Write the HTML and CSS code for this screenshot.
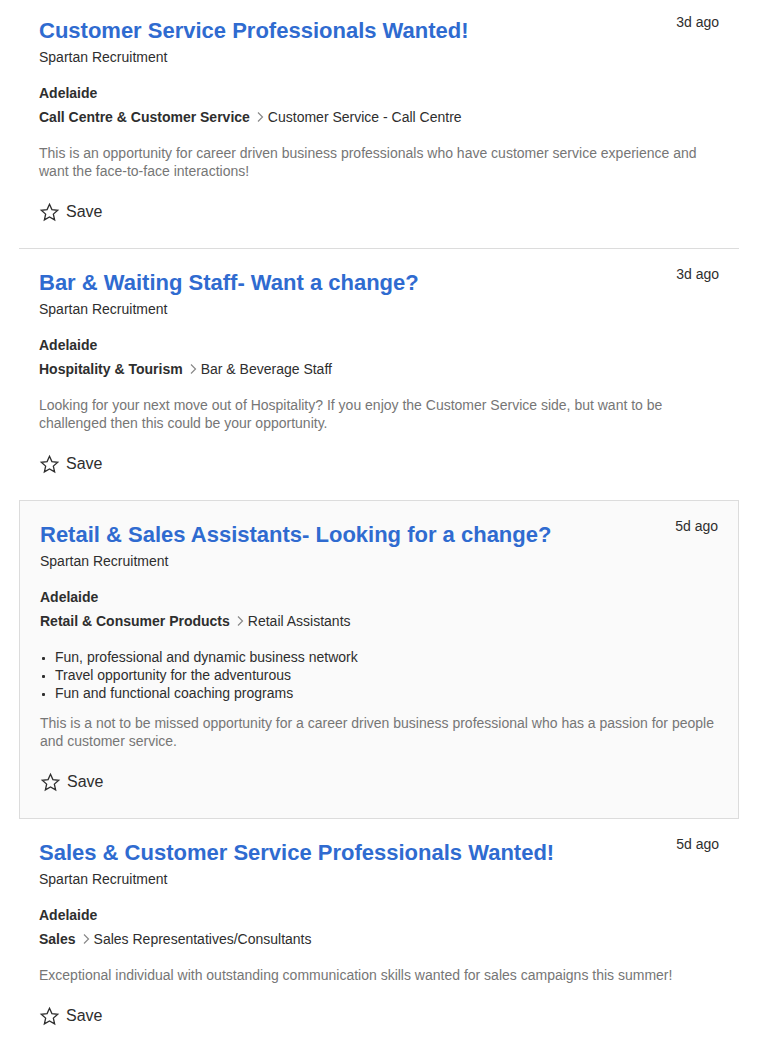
FILE: index.html
```html
<!DOCTYPE html>
<html lang="en">
<head>
<meta charset="utf-8">
<title>Jobs</title>
<link rel="stylesheet" href="styles.css">
</head>
<body>
<div class="list">
  <article class="card">
    <div class="date">3d ago</div>
    <h2 class="title">Customer Service Professionals Wanted!</h2>
    <div class="company">Spartan Recruitment</div>
    <div class="location">Adelaide</div>
    <div class="category"><b>Call Centre &amp; Customer Service</b><svg class="chev" viewBox="0 0 8 12" width="8" height="12"><path d="M2 1.5 L6.5 6 L2 10.5" fill="none" stroke="#888" stroke-width="1.2"/></svg><span>Customer Service - Call Centre</span></div>
    <p class="desc">This is an opportunity for career driven business professionals who have customer service experience and want the face-to-face interactions!</p>
    <div class="save"><svg class="star" viewBox="0 0 24 24" width="21" height="21"><path d="M12 2.6 L14.75 8.7 L21.4 9.4 L16.4 13.85 L17.85 20.4 L12 17.05 L6.15 20.4 L7.6 13.85 L2.6 9.4 L9.25 8.7 Z" fill="none" stroke="#2e2e2e" stroke-width="1.5" stroke-linejoin="miter"/></svg><span>Save</span></div>
  </article>
  <article class="card no-line">
    <div class="date">3d ago</div>
    <h2 class="title">Bar &amp; Waiting Staff- Want a change?</h2>
    <div class="company">Spartan Recruitment</div>
    <div class="location">Adelaide</div>
    <div class="category"><b>Hospitality &amp; Tourism</b><svg class="chev" viewBox="0 0 8 12" width="8" height="12"><path d="M2 1.5 L6.5 6 L2 10.5" fill="none" stroke="#888" stroke-width="1.2"/></svg><span>Bar &amp; Beverage Staff</span></div>
    <p class="desc">Looking for your next move out of Hospitality? If you enjoy the Customer Service side, but want to be challenged then this could be your opportunity.</p>
    <div class="save"><svg class="star" viewBox="0 0 24 24" width="21" height="21"><path d="M12 2.6 L14.75 8.7 L21.4 9.4 L16.4 13.85 L17.85 20.4 L12 17.05 L6.15 20.4 L7.6 13.85 L2.6 9.4 L9.25 8.7 Z" fill="none" stroke="#2e2e2e" stroke-width="1.5" stroke-linejoin="miter"/></svg><span>Save</span></div>
  </article>
  <article class="card featured">
    <div class="date">5d ago</div>
    <h2 class="title">Retail &amp; Sales Assistants- Looking for a change?</h2>
    <div class="company">Spartan Recruitment</div>
    <div class="location">Adelaide</div>
    <div class="category"><b>Retail &amp; Consumer Products</b><svg class="chev" viewBox="0 0 8 12" width="8" height="12"><path d="M2 1.5 L6.5 6 L2 10.5" fill="none" stroke="#888" stroke-width="1.2"/></svg><span>Retail Assistants</span></div>
    <ul class="points">
      <li>Fun, professional and dynamic business network</li>
      <li>Travel opportunity for the adventurous</li>
      <li>Fun and functional coaching programs</li>
    </ul>
    <p class="desc after-points">This is a not to be missed opportunity for a career driven business professional who has a passion for people and customer service.</p>
    <div class="save"><svg class="star" viewBox="0 0 24 24" width="21" height="21"><path d="M12 2.6 L14.75 8.7 L21.4 9.4 L16.4 13.85 L17.85 20.4 L12 17.05 L6.15 20.4 L7.6 13.85 L2.6 9.4 L9.25 8.7 Z" fill="none" stroke="#2e2e2e" stroke-width="1.5" stroke-linejoin="miter"/></svg><span>Save</span></div>
  </article>
  <article class="card">
    <div class="date">5d ago</div>
    <h2 class="title">Sales &amp; Customer Service Professionals Wanted!</h2>
    <div class="company">Spartan Recruitment</div>
    <div class="location">Adelaide</div>
    <div class="category"><b>Sales</b><svg class="chev" viewBox="0 0 8 12" width="8" height="12"><path d="M2 1.5 L6.5 6 L2 10.5" fill="none" stroke="#888" stroke-width="1.2"/></svg><span>Sales Representatives/Consultants</span></div>
    <p class="desc">Exceptional individual with outstanding communication skills wanted for sales campaigns this summer!</p>
    <div class="save"><svg class="star" viewBox="0 0 24 24" width="21" height="21"><path d="M12 2.6 L14.75 8.7 L21.4 9.4 L16.4 13.85 L17.85 20.4 L12 17.05 L6.15 20.4 L7.6 13.85 L2.6 9.4 L9.25 8.7 Z" fill="none" stroke="#2e2e2e" stroke-width="1.5" stroke-linejoin="miter"/></svg><span>Save</span></div>
  </article>
</div>
</body>
</html>
```
FILE: styles.css
```css
html, body {
  margin: 0;
  padding: 0;
  background: #fff;
}
body {
  font-family: "Liberation Sans", Arial, sans-serif;
  color: #2e2e2e;
  font-size: 14px;
}
.list {
  width: 720px;
  margin-left: 19px;
  margin-top: -3px;
}
.card {
  position: relative;
  padding: 21px 20px 24px;
  border-bottom: 1px solid #dcdcdc;
}
.card.no-line {
  border-bottom: none;
}
.card.featured {
  border: 1px solid #dcdcdc;
  background: #fafafa;
  padding-bottom: 24px;
}
.date {
  position: absolute;
  top: 15px;
  right: 20px;
  font-size: 14px;
  line-height: 20px;
  color: #2e2e2e;
}
.title {
  margin: 0;
  font-size: 22px;
  line-height: 26px;
  font-weight: bold;
  color: #2f6bd0;
}
.company {
  margin-top: 3px;
  line-height: 20px;
}
.location {
  margin-top: 16px;
  line-height: 20px;
  font-weight: bold;
}
.category {
  margin-top: 4px;
  line-height: 20px;
  display: flex;
  align-items: center;
}
.category b {
  font-weight: bold;
}
.chev {
  margin: 0 4px 0 6px;
}
.desc {
  margin: 17px 0 0;
  line-height: 18px;
  color: #767676;
}
.desc.after-points {
  margin-top: 12px;
}
.points {
  list-style: none;
  margin: 17px 0 0;
  padding: 0;
}
.points li {
  position: relative;
  padding-left: 15px;
  line-height: 18px;
}
.points li::before {
  content: "";
  position: absolute;
  left: 2px;
  top: 9px;
  width: 3px;
  height: 3px;
  border-radius: 1px;
  background: #2e2e2e;
}
.save {
  margin-top: 20px;
  display: flex;
  align-items: center;
  font-size: 16px;
  line-height: 24px;
}
.star {
  margin-left: 0;
  margin-right: 6px;
}
```
